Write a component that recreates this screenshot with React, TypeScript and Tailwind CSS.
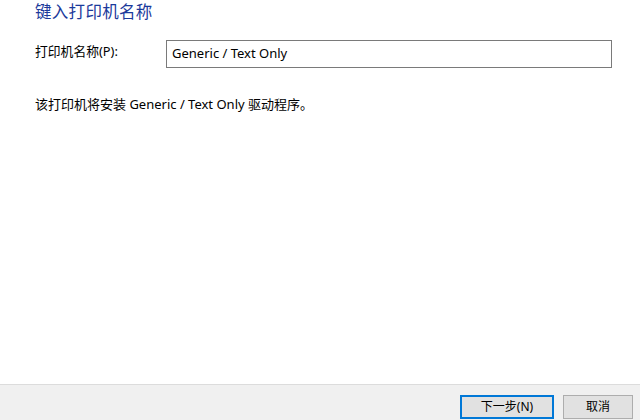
const font = {
  fontFamily: '"Segoe UI", "Noto Sans", "Noto Sans CJK SC", sans-serif',
};

export default function App() {
  return (
    <div
      className="w-[640px] h-[420px] flex flex-col bg-white text-[#000] overflow-hidden"
      style={font}
    >
      {/* Body */}
      <div className="flex-1 flex flex-col pl-[35px] pr-[28px]">
        <h1 className="mt-[1px] text-[16.5px] leading-[22px] text-[#1b3a9b] tracking-[0.3px]">
          键入打印机名称
        </h1>
        <div className="mt-[17px] flex items-center">
          <label className="w-[131px] text-[12.8px] leading-[16px] -mt-[6px]">打印机名称(P):</label>
          <div className="flex-1 h-[28px] border border-[#7a7a7a] flex items-center pl-[5px] text-[13px]">
            Generic / Text Only
          </div>
        </div>
        <p className="mt-[27px] text-[13px] leading-[18px]">
          该打印机将安装 Generic / Text Only 驱动程序。
        </p>
      </div>

      {/* Footer */}
      <div className="h-[36px] border-t border-[#dcdcdc] bg-[#f0f0f0] flex justify-end items-start pt-[10px] pr-[7px] gap-[9px]">
        <button className="w-[94px] h-[24px] border-2 border-[#0078d7] bg-[#e1e1e1] text-[12px] leading-none">
          下一步(N)
        </button>
        <button className="w-[70px] h-[24px] border border-[#adadad] bg-[#e1e1e1] text-[12px] leading-none">
          取消
        </button>
      </div>
    </div>
  );
}
